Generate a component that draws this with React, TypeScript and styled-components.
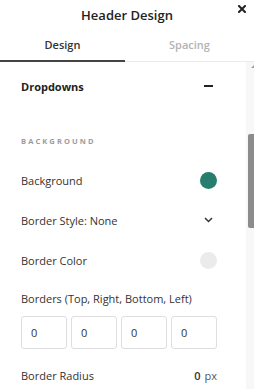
import React from 'react';
import styled, { createGlobalStyle } from 'styled-components';

const GlobalStyle = createGlobalStyle`
  html, body {
    margin: 0;
    padding: 0;
    background: #fff;
  }
  body {
    font-family: 'Open Sans', 'Liberation Sans', sans-serif;
    color: #333;
  }
`;

const Panel = styled.div`
  width: 254px;
  height: 389px;
  display: flex;
  flex-direction: column;
  overflow: hidden;
  background: #fff;
`;

const Header = styled.div`
  height: 30px;
  display: grid;
  grid-template-columns: 1fr auto 1fr;
  align-items: center;
`;

const Title = styled.div`
  grid-column: 2;
  font-size: 13px;
  font-weight: 600;
  color: #222;
  line-height: 30px;
`;

const Close = styled.button`
  grid-column: 3;
  justify-self: end;
  align-self: start;
  margin: 5px 8px 0 0;
  padding: 0;
  border: 0;
  background: none;
  width: 8px;
  height: 8px;
  display: flex;
`;

const Tabs = styled.div`
  display: grid;
  grid-template-columns: 125px 1fr;
  border-bottom: 1px solid #ebebeb;
`;

const Tab = styled.div<{ $active?: boolean }>`
  height: 29px;
  display: flex;
  align-items: center;
  justify-content: center;
  padding-bottom: 1px;
  font-size: 11px;
  font-weight: 600;
  color: ${(p) => (p.$active ? '#333' : '#b3b3b3')};
  border-bottom: 2px solid ${(p) => (p.$active ? '#444' : 'transparent')};
  margin-bottom: -1px;
`;

const Body = styled.div`
  flex: 1;
  display: flex;
  min-height: 0;
`;

const Content = styled.div`
  flex: 1;
  padding: 0 29px 0 21px;
`;

const SectionHead = styled.div`
  height: 48px;
  display: flex;
  align-items: center;
  justify-content: space-between;
  font-size: 11px;
  font-weight: 700;
  color: #222;
`;

const Minus = styled.span`
  width: 9px;
  height: 2px;
  background: #222;
  margin-right: 4px;
`;

const GroupLabel = styled.div`
  height: 16px;
  margin: 23px 0 11px;
  display: flex;
  align-items: center;
  font-size: 7.5px;
  font-weight: 700;
  letter-spacing: 2.1px;
  color: #9c9c9c;
`;

const Row = styled.div`
  height: 40px;
  display: flex;
  align-items: center;
  justify-content: space-between;
  font-size: 11px;
`;

const Swatch = styled.span<{ $color: string }>`
  width: 17px;
  height: 17px;
  border-radius: 50%;
  background: ${(p) => p.$color};
`;

const Chevron = styled.svg`
  width: 9px;
  height: 6px;
  margin-right: 4px;
`;

const FieldLabel = styled.div`
  height: 16px;
  margin-top: 10px;
  display: flex;
  align-items: center;
  font-size: 11px;
`;

const Inputs = styled.div`
  display: grid;
  grid-template-columns: repeat(4, 1fr);
  gap: 4px;
  margin-top: 10px;
`;

const Box = styled.div`
  height: 33px;
  box-sizing: border-box;
  border: 1px solid #dedede;
  border-radius: 3px;
  display: flex;
  align-items: center;
  padding-left: 9px;
  font-size: 11px;
  color: #333;
`;

const Unit = styled.span`
  font-size: 11px;
  color: #555;
  b {
    font-weight: 600;
    color: #333;
    margin-right: 4px;
  }
`;

const RadiusRow = styled(Row)`
  margin-top: 6px;
`;

const ScrollTrack = styled.div`
  width: 8px;
  background: #f7f7f7;
  display: flex;
  flex-direction: column;
  align-items: flex-end;
`;

const ScrollArrow = styled.span`
  margin-top: 3px;
  width: 0;
  height: 0;
  border-left: 3px solid transparent;
  border-bottom: 3px solid #a0a0a0;
`;

const ScrollThumb = styled.span`
  margin-top: 66px;
  width: 6px;
  height: 94px;
  background: #8c8c8c;
  border-radius: 2px 0 0 2px;
`;

export default function App() {
  return (
    <>
      <GlobalStyle />
      <Panel>
        <Header>
          <Title>Header Design</Title>
          <Close aria-label="close">
            <svg width="8" height="8" viewBox="0 0 8 8">
              <path d="M1 1L7 7M7 1L1 7" stroke="#222" strokeWidth="2" strokeLinecap="square" />
            </svg>
          </Close>
        </Header>
        <Tabs>
          <Tab $active>Design</Tab>
          <Tab>Spacing</Tab>
        </Tabs>
        <Body>
          <Content>
            <SectionHead>
              Dropdowns
              <Minus />
            </SectionHead>
            <GroupLabel>BACKGROUND</GroupLabel>
            <Row>
              Background
              <Swatch $color="#277e6e" />
            </Row>
            <Row>
              Border Style: None
              <Chevron viewBox="0 0 9 6">
                <path d="M1 1L4.5 4.5L8 1" fill="none" stroke="#333" strokeWidth="1.5" />
              </Chevron>
            </Row>
            <Row>
              Border Color
              <Swatch $color="#ebebeb" />
            </Row>
            <FieldLabel>Borders (Top, Right, Bottom, Left)</FieldLabel>
            <Inputs>
              {['0', '0', '0', '0'].map((v, i) => (
                <Box key={i}>{v}</Box>
              ))}
            </Inputs>
            <RadiusRow>
              Border Radius
              <Unit>
                <b>0</b>px
              </Unit>
            </RadiusRow>
          </Content>
          <ScrollTrack>
            <ScrollArrow />
            <ScrollThumb />
          </ScrollTrack>
        </Body>
      </Panel>
    </>
  );
}
